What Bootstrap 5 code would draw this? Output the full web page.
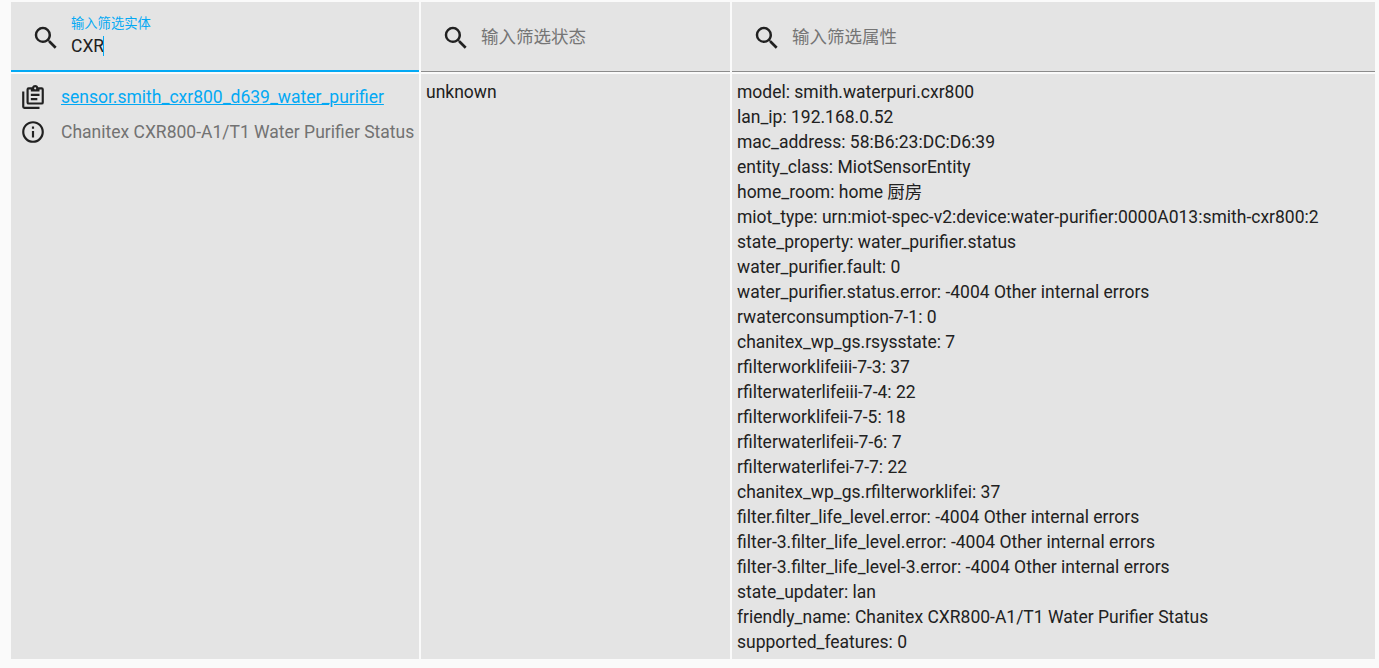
<!DOCTYPE html>
<html lang="zh">
<head>
<meta charset="utf-8">
<title>Entities</title>
<link href="https://cdn.jsdelivr.net/npm/bootstrap@5.3.0/dist/css/bootstrap.min.css" rel="stylesheet">
<style>
html,body{height:100%;}
body{background:#fafafa;font-family:Roboto,"Noto Sans CJK SC",sans-serif;font-size:17.5px;color:#212121;overflow:hidden;}
.ent-grid{display:grid;grid-template-columns:408px 309px 643px;column-gap:2px;row-gap:2px;padding:2px 0 0 11px;}
.ent-head{height:70px;background:#e4e4e4;border-bottom:1px solid #8c8c8c;padding-left:20px;}
.ent-head.active-col{border-bottom:2px solid #03a9f4;}
.ent-head svg{width:30px;height:30px;fill:#212121;flex:none;margin-right:10px;margin-top:3px;}
.ent-field{position:relative;flex:1;}
.ent-filled{margin-top:4px;}
.ent-ph{color:#757575;line-height:24px;margin-top:1px;}
.ent-float{color:#03a9f4;font-size:13.3px;line-height:16px;margin-top:-2px;}
.ent-value{line-height:24px;height:24px;margin-top:2px;}
.ent-caret{display:inline-block;width:1px;height:20px;background:#03a9f4;vertical-align:-4px;margin-left:-1px;}
.ent-cell{background:#e4e4e4;padding:6px 5px 4px;line-height:25px;white-space:nowrap;height:585px;}
.ent-first{padding:6px 0 0 11px;}
.ent-line{height:35px;}
.ent-line svg{width:26px;height:26px;fill:#212121;flex:none;margin:-2px 15px 0 -2px;}
.ent-link{color:#03a9f4;text-decoration:underline;}
.ent-sec{color:#727272;}
</style>
</head>
<body>
<div class="ent-grid">
  <div class="ent-head active-col d-flex align-items-center">
    <svg viewBox="0 0 24 24"><path d="M9.5,3A6.5,6.5 0 0,1 16,9.5C16,11.11 15.41,12.59 14.44,13.73L14.71,14H15.5L20.5,19L19,20.5L14,15.5V14.71L13.73,14.44C12.59,15.41 11.11,16 9.5,16A6.5,6.5 0 0,1 3,9.5A6.5,6.5 0 0,1 9.5,3M9.5,5C7,5 5,7 5,9.5C5,12 7,14 9.5,14C12,14 14,12 14,9.5C14,7 12,5 9.5,5Z"/></svg>
    <div class="ent-field ent-filled">
      <div class="ent-float">输入筛选实体</div>
      <div class="ent-value">CXR<span class="ent-caret"></span></div>
    </div>
  </div>
  <div class="ent-head d-flex align-items-center">
    <svg viewBox="0 0 24 24"><path d="M9.5,3A6.5,6.5 0 0,1 16,9.5C16,11.11 15.41,12.59 14.44,13.73L14.71,14H15.5L20.5,19L19,20.5L14,15.5V14.71L13.73,14.44C12.59,15.41 11.11,16 9.5,16A6.5,6.5 0 0,1 3,9.5A6.5,6.5 0 0,1 9.5,3M9.5,5C7,5 5,7 5,9.5C5,12 7,14 9.5,14C12,14 14,12 14,9.5C14,7 12,5 9.5,5Z"/></svg>
    <div class="ent-field ent-ph">输入筛选状态</div>
  </div>
  <div class="ent-head d-flex align-items-center">
    <svg viewBox="0 0 24 24"><path d="M9.5,3A6.5,6.5 0 0,1 16,9.5C16,11.11 15.41,12.59 14.44,13.73L14.71,14H15.5L20.5,19L19,20.5L14,15.5V14.71L13.73,14.44C12.59,15.41 11.11,16 9.5,16A6.5,6.5 0 0,1 3,9.5A6.5,6.5 0 0,1 9.5,3M9.5,5C7,5 5,7 5,9.5C5,12 7,14 9.5,14C12,14 14,12 14,9.5C14,7 12,5 9.5,5Z"/></svg>
    <div class="ent-field ent-ph">输入筛选属性</div>
  </div>

  <div class="ent-cell ent-first">
    <div class="ent-line d-flex align-items-center">
      <svg viewBox="0 0 24 24"><path d="M4,7V21H18V23H4A2,2 0 0,1 2,21V7H4M20,3A2,2 0 0,1 22,5V17A2,2 0 0,1 20,19H8A2,2 0 0,1 6,17V5A2,2 0 0,1 8,3H11.18C11.6,1.84 12.7,1 14,1C15.3,1 16.4,1.84 16.82,3H20M14,3A1,1 0 0,0 13,4A1,1 0 0,0 14,5A1,1 0 0,0 15,4A1,1 0 0,0 14,3M10,7V5H8V17H20V5H18V7H10M10,9H18V11H10V9M10,13H16V15H10V13Z"/></svg>
      <a class="ent-link" href="#">sensor.smith_cxr800_d639_water_purifier</a>
    </div>
    <div class="ent-line d-flex align-items-center">
      <svg viewBox="0 0 24 24"><path d="M11,9H13V7H11M12,20C7.59,20 4,16.41 4,12C4,7.59 7.59,4 12,4C16.41,4 20,7.59 20,12C20,16.41 16.41,20 12,20M12,2A10,10 0 0,0 2,12A10,10 0 0,0 12,22A10,10 0 0,0 22,12A10,10 0 0,0 12,2M11,17H13V11H11V17Z"/></svg>
      <span class="ent-sec">Chanitex CXR800-A1/T1 Water Purifier Status</span>
    </div>
  </div>
  <div class="ent-cell">unknown</div>
  <div class="ent-cell">
    <div>model: smith.waterpuri.cxr800</div>
    <div>lan_ip: 192.168.0.52</div>
    <div>mac_address: 58:B6:23:DC:D6:39</div>
    <div>entity_class: MiotSensorEntity</div>
    <div>home_room: home 厨房</div>
    <div>miot_type: urn:miot-spec-v2:device:water-purifier:0000A013:smith-cxr800:2</div>
    <div>state_property: water_purifier.status</div>
    <div>water_purifier.fault: 0</div>
    <div>water_purifier.status.error: -4004 Other internal errors</div>
    <div>rwaterconsumption-7-1: 0</div>
    <div>chanitex_wp_gs.rsysstate: 7</div>
    <div>rfilterworklifeiii-7-3: 37</div>
    <div>rfilterwaterlifeiii-7-4: 22</div>
    <div>rfilterworklifeii-7-5: 18</div>
    <div>rfilterwaterlifeii-7-6: 7</div>
    <div>rfilterwaterlifei-7-7: 22</div>
    <div>chanitex_wp_gs.rfilterworklifei: 37</div>
    <div>filter.filter_life_level.error: -4004 Other internal errors</div>
    <div>filter-3.filter_life_level.error: -4004 Other internal errors</div>
    <div>filter-3.filter_life_level-3.error: -4004 Other internal errors</div>
    <div>state_updater: lan</div>
    <div>friendly_name: Chanitex CXR800-A1/T1 Water Purifier Status</div>
    <div>supported_features: 0</div>
  </div>
</div>
<script src="https://cdn.jsdelivr.net/npm/bootstrap@5.3.0/dist/js/bootstrap.bundle.min.js"></script>
</body>
</html>
